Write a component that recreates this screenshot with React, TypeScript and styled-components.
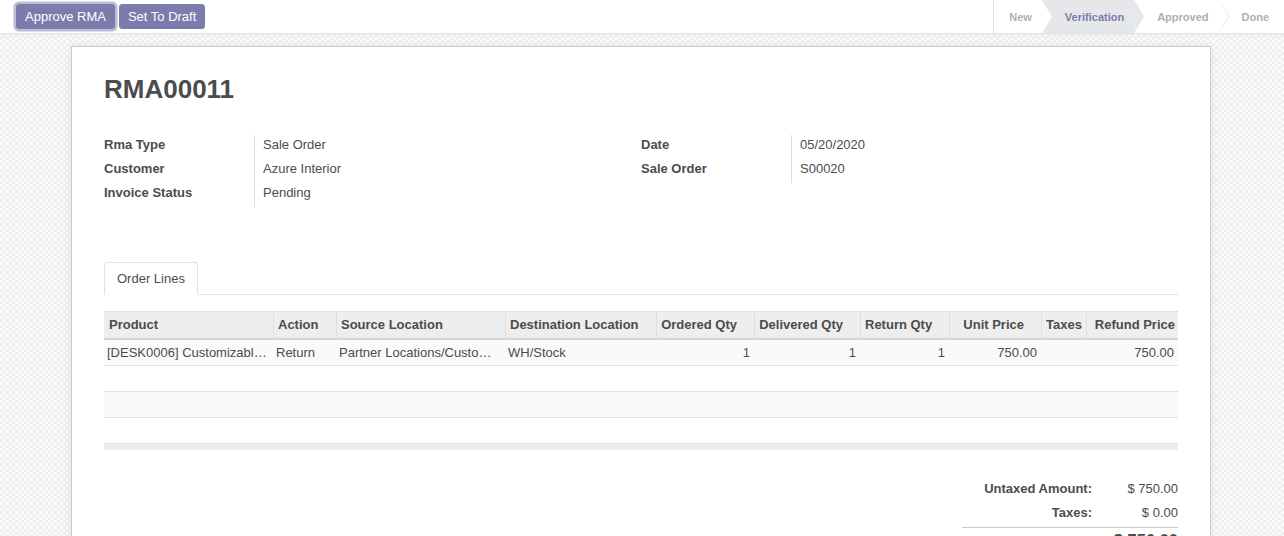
import React from "react";
import styled, { createGlobalStyle } from "styled-components";

const GlobalStyle = createGlobalStyle`
  html, body { margin: 0; padding: 0; overflow: hidden; background: #fff; }
  body {
    font-family: "Liberation Sans", Arial, Helvetica, sans-serif;
    font-size: 13px;
    color: #4c4c4c;
  }
  *, *::before, *::after { box-sizing: border-box; }
`;

const Page = styled.div`
  display: flex;
  flex-direction: column;
`;

/* ---------- control panel ---------- */
const ControlPanel = styled.header`
  display: flex;
  justify-content: space-between;
  align-items: stretch;
  height: 34px;
  padding-left: 16px;
  background: #fff;
  border-bottom: 1px solid #dee2e6;
  position: relative;
  z-index: 2;
  box-shadow: 0 2px 4px rgba(0, 0, 0, 0.04);
`;

const ButtonBar = styled.div`
  display: flex;
  align-items: center;
  gap: 4px;
`;

const ActionButton = styled.button<{ $focused?: boolean }>`
  height: 25px;
  padding: 0 8px;
  border: 1px solid #7c7bad;
  border-radius: 3px;
  background: #7c7bad;
  color: #fff;
  font-family: "Liberation Sans", Arial, sans-serif;
  font-size: 13px;
  line-height: 23px;
  box-shadow: ${(p) => (p.$focused ? "0 0 0 2.6px rgba(124, 123, 173, 0.5)" : "none")};
`;

const StatusBar = styled.div`
  display: flex;
  align-items: stretch;
  border-left: 1px solid #dee2e6;
`;

const StatusItem = styled.div<{
  $active?: boolean;
  $first?: boolean;
  $last?: boolean;
  $line?: boolean;
  $z: number;
}>`
  position: relative;
  z-index: ${(p) => p.$z};
  display: flex;
  align-items: center;
  padding: 0 ${(p) => (p.$last ? 15 : 10)}px 0 ${(p) => (p.$first ? 15 : 23)}px;
  font-size: 11px;
  font-weight: bold;
  color: ${(p) => (p.$active ? "#7c7bad" : "#aab0ba")};
  background: ${(p) => (p.$active ? "#e5e7ea" : "#fff")};

  &::before {
    content: ${(p) => (p.$line ? '""' : "none")};
    position: absolute;
    top: 0;
    right: -11px;
    width: 11px;
    height: 100%;
    background: #dcdfe3;
    clip-path: polygon(0 0, 100% 50%, 0 100%);
  }

  &::after {
    content: ${(p) => (p.$last ? "none" : '""')};
    position: absolute;
    top: 0;
    right: -10px;
    width: 10px;
    height: 100%;
    background: ${(p) => (p.$active ? "#e5e7ea" : "#fff")};
    clip-path: polygon(0 0, 100% 50%, 0 100%);
  }
`;

/* ---------- form ---------- */
const FormBackground = styled.main`
  padding-top: 12px;
  background-color: #f7f7f7;
  background-image: repeating-conic-gradient(#efefef 0% 25%, #fbfbfb 0% 50%);
  background-size: 6px 6px;
`;

const Sheet = styled.div`
  width: 1140px;
  margin-left: 71px;
  min-height: 620px;
  padding: 24px 32px 40px;
  background: #fff;
  border: 1px solid #c9c8d5;
  box-shadow: 0 0 10px rgba(0, 0, 0, 0.08);
`;

const Title = styled.h1`
  margin: 3px 0 0;
  font-size: 26px;
  line-height: 31px;
  font-weight: bold;
  color: #4c4c4c;
`;

const GroupGrid = styled.div`
  display: grid;
  grid-template-columns: 1fr 1fr;
  align-items: start;
  margin-top: 30px;
`;

const Group = styled.div`
  display: flex;
  flex-direction: column;
`;

const FieldRow = styled.div`
  display: grid;
  grid-template-columns: 151px 1fr;
  height: 24px;
`;

const FieldLabel = styled.div`
  padding-top: 2px;
  line-height: 16px;
  font-weight: bold;
  border-right: 1px solid #dcdcdc;
`;

const FieldValue = styled.div`
  padding: 2px 0 0 8px;
  line-height: 16px;
`;

const TabNav = styled.div`
  display: flex;
  margin-top: 55px;
  border-bottom: 1px solid #dee2e6;
`;

const Tab = styled.div`
  margin-bottom: -1px;
  padding: 6px 12px;
  line-height: 19px;
  background: #fff;
  border: 1px solid #dee2e6;
  border-bottom-color: #fff;
  border-radius: 3px 3px 0 0;
`;

const Table = styled.table`
  width: 100%;
  margin-top: 16px;
  table-layout: fixed;
  border-collapse: separate;
  border-spacing: 0;
`;

const HeadCell = styled.th<{ $num?: boolean; $padRight: number; $first?: boolean }>`
  padding: 0 ${(p) => p.$padRight}px 1px ${(p) => (p.$first ? 5 : 4)}px;
  line-height: 25px;
  font-weight: bold;
  text-align: ${(p) => (p.$num ? "right" : "left")};
  white-space: nowrap;
  overflow: hidden;
  background: #eee;
  border-top: 1px solid #dfdfdf;
  border-bottom: 2px solid #d6d6d6;
  border-left: ${(p) => (p.$first ? "none" : "1px solid #dedede")};
`;

const BodyRow = styled.tr`
  &:nth-child(odd) td {
    background: #fafafa;
  }
`;

const BodyCell = styled.td<{ $num?: boolean }>`
  padding: 3px ${(p) => (p.$num ? 4 : 3)}px 3px 3px;
  line-height: 19px;
  text-align: ${(p) => (p.$num ? "right" : "left")};
  white-space: nowrap;
  overflow: hidden;
  text-overflow: ellipsis;
  border-bottom: 1px solid #e0e0e0;
`;

const FootCell = styled.td`
  height: 6px;
  padding: 0;
  font-size: 0;
  line-height: 0;
  background: #eee;
`;

const Totals = styled.div`
  display: flex;
  justify-content: flex-end;
  margin-top: 27px;
`;

const TotalsGrid = styled.div`
  display: grid;
  grid-template-columns: 130px 86px;
  align-items: baseline;
`;

const TotalLabel = styled.div`
  font-weight: bold;
  text-align: right;
  line-height: 24px;
`;

const TotalValue = styled.div<{ $grand?: boolean }>`
  text-align: right;
  line-height: 24px;
  font-size: ${(p) => (p.$grand ? "16.5px" : "13px")};
  font-weight: ${(p) => (p.$grand ? "bold" : "normal")};
`;

const TotalSeparator = styled.div`
  grid-column: 1 / -1;
  margin-top: 2px;
  border-top: 1px solid #cbcbcb;
`;

/* ---------- data ---------- */
const statuses = ["New", "Verification", "Approved", "Done"];
const activeStatus = 1;

const leftFields = [
  ["Rma Type", "Sale Order"],
  ["Customer", "Azure Interior"],
  ["Invoice Status", "Pending"],
];
const rightFields = [
  ["Date", "05/20/2020"],
  ["Sale Order", "S00020"],
];

type Column = { label: string; width: number; num?: boolean; headPad: number };
const columns: Column[] = [
  { label: "Product", width: 169, headPad: 4 },
  { label: "Action", width: 63, headPad: 4 },
  { label: "Source Location", width: 169, headPad: 4 },
  { label: "Destination Location", width: 151, headPad: 4 },
  { label: "Ordered Qty", width: 98, num: true, headPad: 17 },
  { label: "Delivered Qty", width: 106, num: true, headPad: 17 },
  { label: "Return Qty", width: 89, num: true, headPad: 17 },
  { label: "Unit Price", width: 92, num: true, headPad: 17 },
  { label: "Taxes", width: 45, headPad: 4 },
  { label: "Refund Price", width: 92, num: true, headPad: 3 },
];

const lines: string[][] = [
  [
    "[DESK0006] Customizable Desk (CONFIG)",
    "Return",
    "Partner Locations/Customers",
    "WH/Stock",
    "1",
    "1",
    "1",
    "750.00",
    "",
    "750.00",
  ],
];
const emptyRows = 3;

export default function App() {
  const rows = [...lines, ...Array.from({ length: emptyRows }, () => columns.map(() => ""))];
  return (
    <Page>
      <GlobalStyle />
      <ControlPanel>
        <ButtonBar>
          <ActionButton $focused>Approve RMA</ActionButton>
          <ActionButton>Set To Draft</ActionButton>
        </ButtonBar>
        <StatusBar>
          {statuses.map((s, i) => (
            <StatusItem
              key={s}
              $z={statuses.length - i}
              $first={i === 0}
              $last={i === statuses.length - 1}
              $active={i === activeStatus}
              $line={i !== activeStatus && i + 1 !== activeStatus && i < statuses.length - 1}
            >
              {s}
            </StatusItem>
          ))}
        </StatusBar>
      </ControlPanel>

      <FormBackground>
        <Sheet>
          <Title>RMA00011</Title>
          <GroupGrid>
            <Group>
              {leftFields.map(([l, v]) => (
                <FieldRow key={l}>
                  <FieldLabel>{l}</FieldLabel>
                  <FieldValue>{v}</FieldValue>
                </FieldRow>
              ))}
            </Group>
            <Group>
              {rightFields.map(([l, v]) => (
                <FieldRow key={l}>
                  <FieldLabel>{l}</FieldLabel>
                  <FieldValue>{v}</FieldValue>
                </FieldRow>
              ))}
            </Group>
          </GroupGrid>

          <TabNav>
            <Tab>Order Lines</Tab>
          </TabNav>

          <Table>
            <colgroup>
              {columns.map((c) => (
                <col key={c.label} style={{ width: c.width }} />
              ))}
            </colgroup>
            <thead>
              <tr>
                {columns.map((c, i) => (
                  <HeadCell key={c.label} $num={c.num} $padRight={c.headPad} $first={i === 0}>
                    {c.label}
                  </HeadCell>
                ))}
              </tr>
            </thead>
            <tbody>
              {rows.map((r, ri) => (
                <BodyRow key={ri}>
                  {r.map((cell, ci) => (
                    <BodyCell key={ci} $num={columns[ci].num}>
                      {cell || "\u00a0"}
                    </BodyCell>
                  ))}
                </BodyRow>
              ))}
            </tbody>
            <tfoot>
              <tr>
                <FootCell colSpan={columns.length} />
              </tr>
            </tfoot>
          </Table>

          <Totals>
            <TotalsGrid>
              <TotalLabel>Untaxed Amount:</TotalLabel>
              <TotalValue>$ 750.00</TotalValue>
              <TotalLabel>Taxes:</TotalLabel>
              <TotalValue>$ 0.00</TotalValue>
              <TotalSeparator />
              <TotalLabel>Total:</TotalLabel>
              <TotalValue $grand>$ 750.00</TotalValue>
            </TotalsGrid>
          </Totals>
        </Sheet>
      </FormBackground>
    </Page>
  );
}
